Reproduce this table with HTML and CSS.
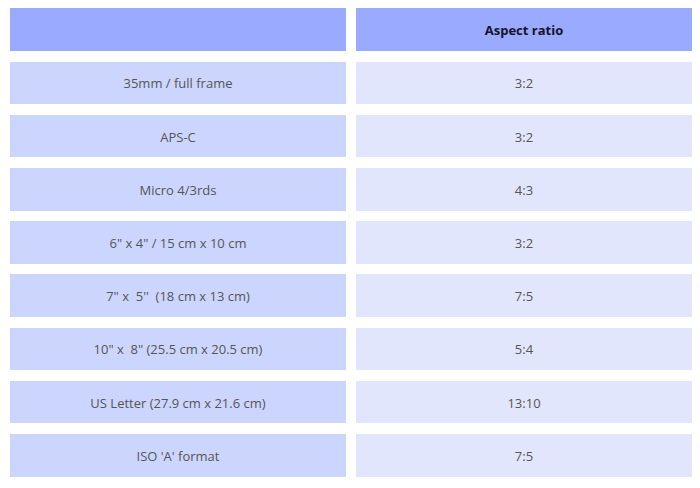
FILE: index.html
```html
<!DOCTYPE html>
<html>
<head>
<meta charset="utf-8">
<link rel="stylesheet" href="styles.css">
</head>
<body>
<div class="table">
  <div class="cell head"></div>
  <div class="cell head">Aspect ratio</div>
  <div class="cell left">35mm / full frame</div>
  <div class="cell right">3:2</div>
  <div class="cell left">APS-C</div>
  <div class="cell right">3:2</div>
  <div class="cell left">Micro 4/3rds</div>
  <div class="cell right">4:3</div>
  <div class="cell left">6" x 4" / 15 cm x 10 cm</div>
  <div class="cell right">3:2</div>
  <div class="cell left">7" x&nbsp; 5''&nbsp; (18 cm x 13 cm)</div>
  <div class="cell right">7:5</div>
  <div class="cell left">10" x&nbsp; 8" (25.5 cm x 20.5 cm)</div>
  <div class="cell right">5:4</div>
  <div class="cell left">US Letter (27.9 cm x 21.6 cm)</div>
  <div class="cell right">13:10</div>
  <div class="cell left">ISO 'A' format</div>
  <div class="cell right">7:5</div>
</div>
</body>
</html>
```
FILE: styles.css
```css
html, body {
  margin: 0;
  background: #ffffff;
}
.table {
  display: grid;
  grid-template-columns: 336px 336px;
  grid-template-rows: 43px;
  grid-auto-rows: 42.6px;
  column-gap: 10px;
  row-gap: 10.6px;
  padding: 8px 0 0 10px;
  font-family: "Open Sans", sans-serif;
  font-size: 13px;
  color: #555555;
}
.cell {
  display: flex;
  align-items: center;
  justify-content: center;
  padding-top: 1px;
}
.head {
  background: #9aabff;
  color: #14142b;
  font-weight: 700;
}
.left {
  background: #ccd5fd;
}
.right {
  background: #e2e6fc;
}
```
